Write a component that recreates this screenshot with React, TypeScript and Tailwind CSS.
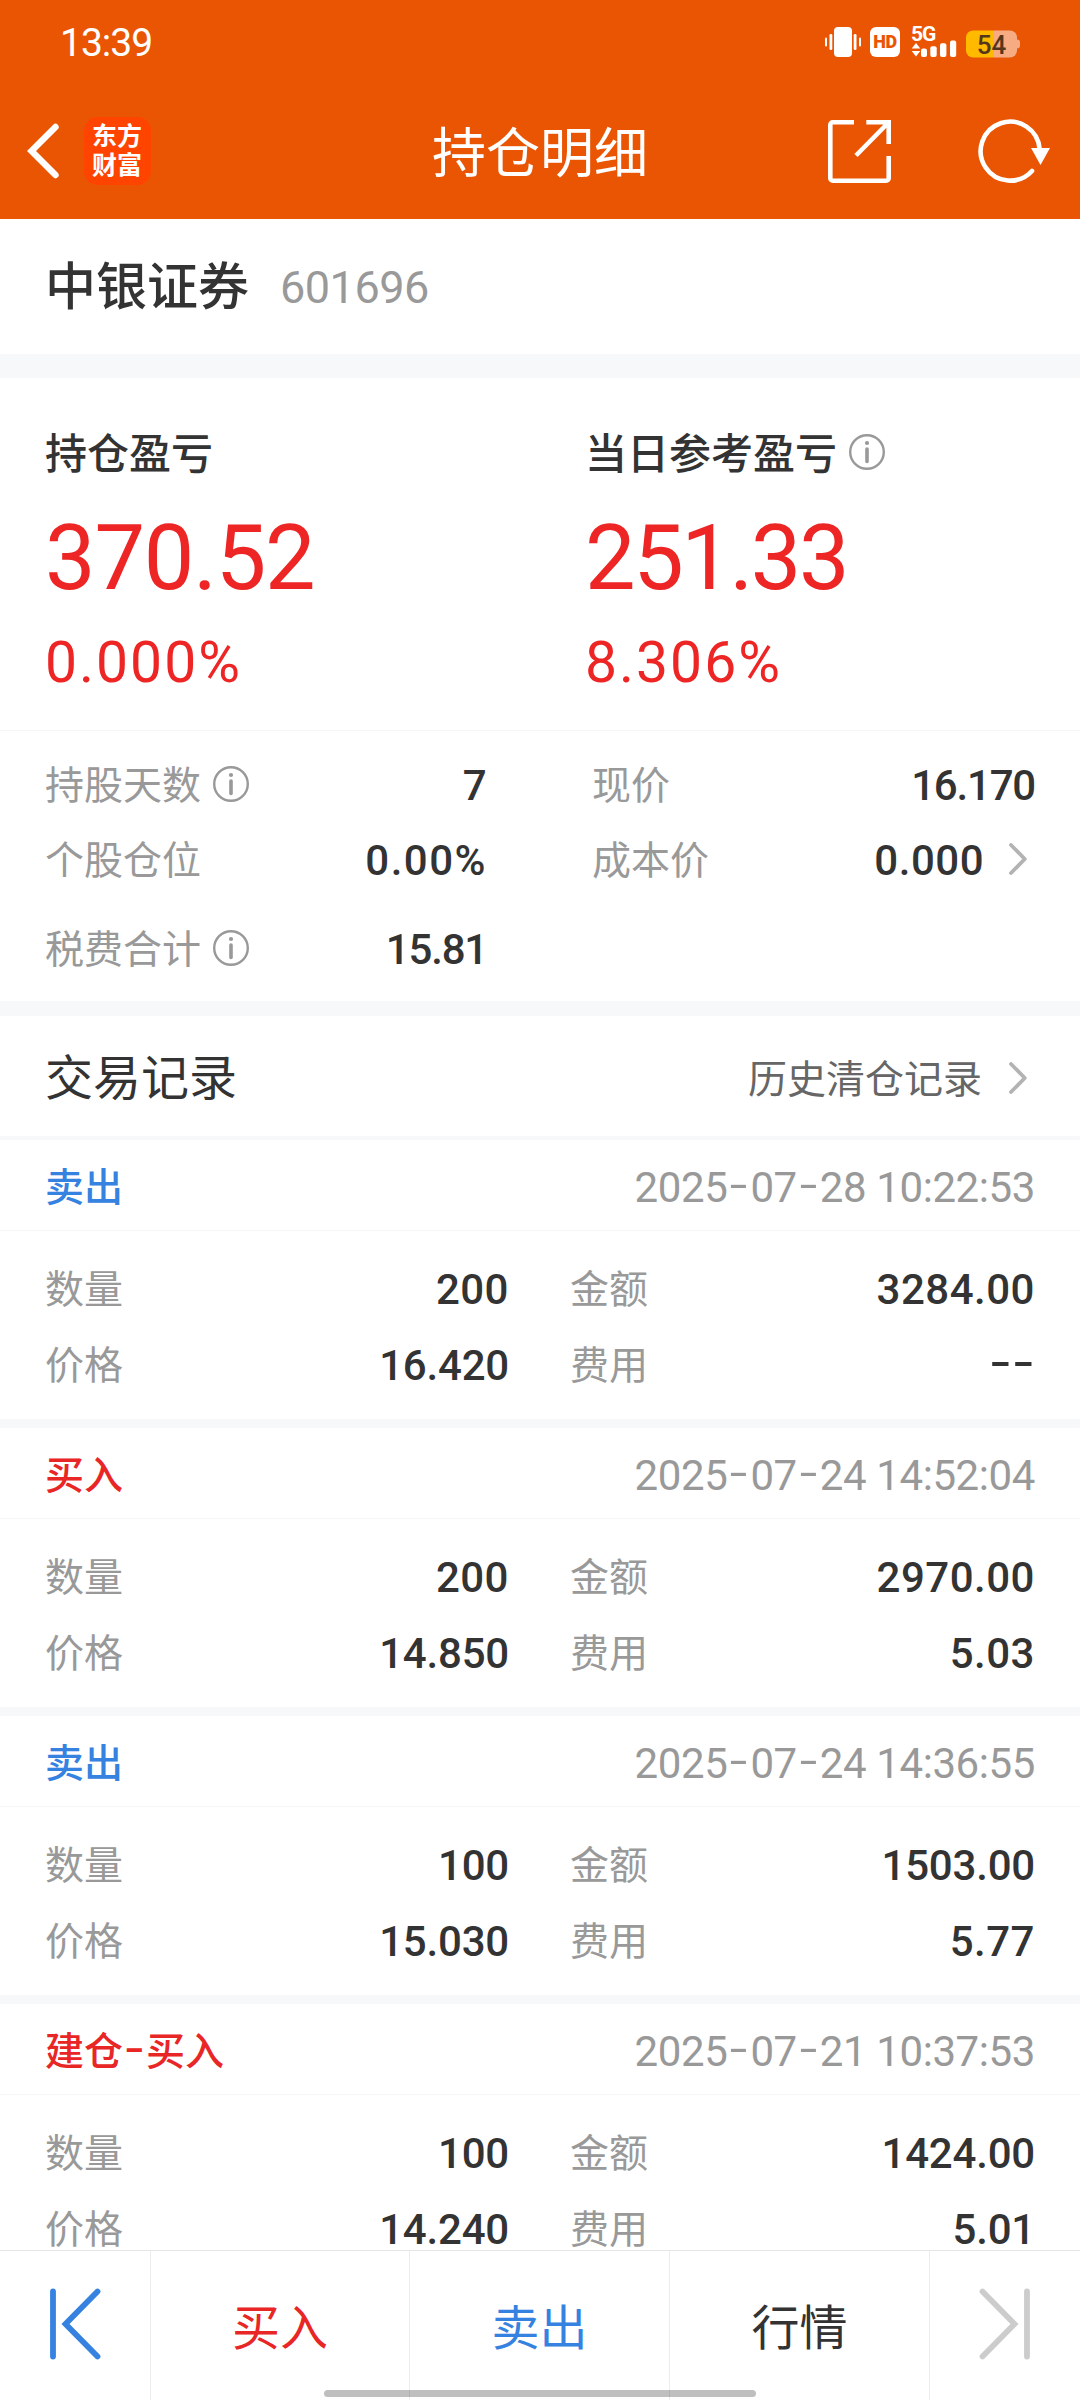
import clsx from "clsx";

type Trade = {
  side: string;
  sell?: boolean;
  time: string;
  count: string;
  amount: string;
  price: string;
  fee: string;
};

const trades: Trade[] = [
  { side: "卖出", sell: true, time: "2025-07-28 10:22:53", count: "200", amount: "3284.00", price: "16.420", fee: "--" },
  { side: "买入", time: "2025-07-24 14:52:04", count: "200", amount: "2970.00", price: "14.850", fee: "5.03" },
  { side: "卖出", sell: true, time: "2025-07-24 14:36:55", count: "100", amount: "1503.00", price: "15.030", fee: "5.77" },
  { side: "建仓-买入", time: "2025-07-21 10:37:53", count: "100", amount: "1424.00", price: "14.240", fee: "5.01" },
];

// Roboto's hyphen is short and sits low, so widen and lift it
const Dashed = ({ text }: { text: string }) => (
  <>
    {text.split(/(-)/).map((part, i) =>
      part === "-" ? (
        <span key={i} className="inline-block w-[23px] -translate-y-[3px] scale-x-150 text-center tracking-normal">
          -
        </span>
      ) : (
        part
      )
    )}
  </>
);

// tighten numbers with many ones, their advance is too wide otherwise
const numberTracking = (value: string) => {
  const ones = value.split("1").length - 1;
  if (ones > 1) return "tracking-[-1.2px]";
  if (value.includes("%")) return "tracking-[1.5px]";
  return ones === 1 ? "tracking-[-0.2px]" : "tracking-[0.5px]";
};

const InfoIcon = ({ className }: { className?: string }) => (
  <svg className={clsx("h-9 w-9 shrink-0", className)} viewBox="0 0 36 36" fill="none">
    <circle cx="18" cy="18" r="16.8" stroke="#999" strokeWidth="2.4" />
    <circle cx="18" cy="9" r="2.1" fill="#999" />
    <path d="M18 15v12.5" stroke="#999" strokeWidth="3.6" strokeLinecap="round" />
  </svg>
);

const ArrowRight = () => (
  <svg className="h-8 w-[18px] shrink-0" viewBox="0 0 18 32" fill="none">
    <path d="M2 2l13.8 14L2 30" stroke="#b3b3b3" strokeWidth="3.8" strokeLinecap="round" strokeLinejoin="round" />
  </svg>
);

const StatusBar = () => (
  <div className="flex h-[84px] items-center justify-between pl-[60px] pr-[60px] text-white">
    <span className="pt-[2px] text-[39px] leading-none tracking-[-1px]">13:39</span>
    <div className="flex items-center">
      <svg className="h-[30px] w-9" viewBox="0 0 36 30" fill="#fff">
        <rect x="9" y="0" width="18" height="30" rx="4" />
        <rect x="0" y="10.5" width="2" height="9" rx="1" />
        <rect x="4.5" y="7" width="2.8" height="16" rx="1.2" />
        <rect x="28.7" y="7" width="2.8" height="16" rx="1.2" />
        <rect x="34" y="10.5" width="2" height="9" rx="1" />
      </svg>
      <div className="ml-[9px] flex h-[30px] w-[30px] items-center justify-center rounded-md bg-white text-[18px] font-black leading-none tracking-[-0.5px] text-[#ea5504]">
        HD
      </div>
      <div className="relative ml-[11px] h-[30px] w-[46px]">
        <span className="absolute -top-[3px] left-0 text-[21px] font-bold leading-[20px] tracking-[-1px]">5G</span>
        <svg className="absolute inset-0 h-[30px] w-[46px]" viewBox="0 0 46 30" fill="#fff">
          <path d="M5 16l4.3 5.6H.7zM5 29.6l4.3-5.6H.7z" />
          <rect x="10" y="21.5" width="6" height="8.5" rx="2" />
          <rect x="19.3" y="19.3" width="6.4" height="10.7" rx="2" />
          <rect x="29" y="16.3" width="6.4" height="13.7" rx="2" />
          <rect x="39" y="13.5" width="6.2" height="16.5" rx="2" />
        </svg>
      </div>
      <div className="ml-[9px] flex h-[27px] translate-y-[1.5px] items-center">
        <div className="flex h-[27px] w-[51px] items-center justify-center rounded-[7px] bg-linear-to-r from-[#ffba00] from-54% to-[#f6ab83] to-54% pt-[2px] text-[26px] font-medium leading-none text-[#54371a]">
          54
        </div>
        <div className="h-[9px] w-[3px] rounded-r-sm bg-[#f6ab83]" />
      </div>
    </div>
  </div>
);

const Header = () => (
  <header className="h-[219px] shrink-0 bg-[#ea5504] text-white">
    <StatusBar />
    <div className="grid h-[135px] grid-cols-[1fr_auto_1fr] items-center pb-[1px]">
      <div className="flex items-center pl-[27px]">
        <svg className="h-[56px] w-8" viewBox="0 0 32 56" fill="none">
          <path d="M28.5 4L4.5 28l24 24" stroke="#fff" strokeWidth="6.4" strokeLinecap="round" strokeLinejoin="miter" />
        </svg>
        <div className="ml-[25px] flex h-[68px] w-[67px] flex-col items-center justify-center rounded-[14px] bg-[#ff4400] pr-[1px] text-[25px] font-bold leading-[29px]">
          <span>东方</span>
          <span>财富</span>
        </div>
      </div>
      <h1 className="pt-[7px] text-[54px] leading-none">持仓明细</h1>
      <div className="flex items-center justify-end pr-[29px]">
        <svg className="h-16 w-16" viewBox="0 0 64 64" fill="none" stroke="#fff" strokeWidth="4.6">
          <path d="M26 3.3H4.8a2.5 2.5 0 0 0-2.5 2.5v53.400a2.500 2.500 0 0 0 2.500 2.500h53.400a2.500 2.500 0 0 0 2.500-2.500V37" />
          <path d="M38.300 3.300h22.400V25M60 4L28 36.500" />
        </svg>
        <svg className="ml-[86px] h-16 w-[73px]" viewBox="0 0 73 64" fill="none">
          <path d="M61.600 30A29.500 29.500 0 1 0 54 52" stroke="#fff" strokeWidth="4.600" strokeLinecap="round" />
          <path d="M53 29h19L62.500 46z" fill="#fff" />
        </svg>
      </div>
    </div>
  </header>
);

const Summary = () => (
  <section className="grid h-[353px] shrink-0 grid-cols-[540px_1fr] border-b border-[#f5f6f8] pl-[45px] pt-[51px] text-[#ee2525]">
    <div>
      <div className="h-[52px] text-[42px] font-medium leading-[52px] text-[#333]">持仓盈亏</div>
      <div className="mt-[28px] h-[100px] text-[90px] leading-[100px] tracking-[-1.2px]">370.52</div>
      <div className="mt-[22px] text-[57px] leading-[64px] tracking-[2px]">0.000%</div>
    </div>
    <div>
      <div className="flex h-[52px] items-center text-[42px] font-medium leading-[52px] text-[#333]">
        当日参考盈亏
        <InfoIcon className="mb-[7px] ml-[12px]" />
      </div>
      <div className="mt-[28px] h-[100px] text-[90px] leading-[100px] tracking-[-2.4px]">251.33</div>
      <div className="mt-[22px] text-[57px] leading-[64px] tracking-[2px]">8.306%</div>
    </div>
  </section>
);

const Detail = ({ label, value, info, arrow }: { label: string; value: string; info?: boolean; arrow?: boolean }) => (
  <div className="flex items-center">
    <span className="text-[39px] leading-[60px] text-[#999]">{label}</span>
    {info && <InfoIcon className="mb-[3px] ml-[12px]" />}
    <span className={clsx("ml-auto text-[42px] font-medium leading-[60px] text-[#333]", numberTracking(value))}>
      {value}
    </span>
    {arrow && (
      <span className="ml-[25px] mr-[8px] flex pb-1">
        <ArrowRight />
      </span>
    )}
  </div>
);

const Details = () => (
  <section className="grid h-[270px] shrink-0 grid-cols-[442px_443px] grid-rows-[75px_75px_103px] justify-between pl-[45px] pr-[45px] pt-[17px]">
    <Detail label="持股天数" value="7" info />
    <Detail label="现价" value="16.170" />
    <Detail label="个股仓位" value="0.00%" />
    <Detail label="成本价" value="0.000" arrow />
    <Detail label="税费合计" value="15.81" info />
  </section>
);

const Field = ({ label, value }: { label: string; value: string }) => (
  <div className="flex items-center justify-between">
    <span className="text-[39px] leading-[42px] text-[#999]">{label}</span>
    <span className={clsx("text-[42px] font-medium leading-[42px] text-[#333]", numberTracking(value))}>
      <Dashed text={value} />
    </span>
  </div>
);

const TradeCard = ({ trade }: { trade: Trade }) => (
  <li className="mb-[9px] h-[279px] bg-white">
    <div className="flex h-[91px] items-center justify-between border-b border-[#f5f6f8] px-[45px] pt-[5px]">
      <span className={clsx("text-[39px] font-medium leading-[60px]", trade.sell ? "text-[#3582e0]" : "text-[#e92626]")}>
        <Dashed text={trade.side} />
      </span>
      <span className="text-[42px] leading-[60px] tracking-[-0.4px] text-[#999]">
        <Dashed text={trade.time} />
      </span>
    </div>
    <div className="grid grid-cols-[464px_465px] grid-rows-[76px_76px] justify-between px-[45px] pt-[21px]">
      <Field label="数量" value={trade.count} />
      <Field label="金额" value={trade.amount} />
      <Field label="价格" value={trade.price} />
      <Field label="费用" value={trade.fee} />
    </div>
  </li>
);

const BottomBar = () => (
  <nav className="relative grid h-[150px] shrink-0 grid-cols-[151px_259px_260px_260px_1fr] border-t border-[#e6e6e6] bg-white text-[48px]">
    <button className="flex items-center border-r border-[#ececec] pb-[3px] pl-[50px]">
      <svg className="h-[72px] w-[51px]" viewBox="0 0 51 72" fill="none" stroke="#3582e0" strokeWidth="5.800" strokeLinecap="round">
        <path d="M3 3.500v65M47.500 3.500L15.500 36l32 32.500" />
      </svg>
    </button>
    <button className="border-r border-[#ececec] pt-[7px] text-[#e92626]">买入</button>
    <button className="border-r border-[#ececec] pt-[7px] text-[#3582e0]">卖出</button>
    <button className="border-r border-[#ececec] pt-[7px] text-[#333]">行情</button>
    <button className="flex items-center justify-end pb-[3px] pr-[50px]">
      <svg className="h-[72px] w-[51px]" viewBox="0 0 51 72" fill="none" stroke="#ccc" strokeWidth="5.800" strokeLinecap="round">
        <path d="M48 3.500v65M3.500 3.500L35.500 36l-32 32.500" />
      </svg>
    </button>
    <div className="absolute bottom-[3px] left-[324px] h-[7px] w-[432px] rounded-full bg-black/25" />
  </nav>
);

export default function App() {
  return (
    <div className="flex h-[2400px] w-[1080px] flex-col overflow-hidden bg-white font-[Roboto,'Noto_Sans_CJK_SC',sans-serif]">
      <Header />
      <section className="flex h-[135px] shrink-0 items-center pl-[45px]">
        <h2 className="pt-[2px] text-[51px] font-medium leading-none text-[#333]">中银证券</h2>
        <span className="ml-[31px] pt-[2px] text-[45px] leading-none tracking-[-0.5px] text-[#999]">601696</span>
      </section>
      <div className="h-[24px] shrink-0 bg-[#f7f8fa]" />
      <Summary />
      <Details />
      <div className="h-[15px] shrink-0 bg-[#f7f8fa]" />
      <section className="flex h-[120px] shrink-0 items-center justify-between pl-[45px] pr-[53px]">
        <h3 className="pt-[5px] text-[48px] leading-[60px] text-[#333]">交易记录</h3>
        <div className="flex items-center pt-[8px] text-[39px] leading-[60px] text-[#666]">
          历史清仓记录
          <span className="ml-[27px] flex pb-1">
            <ArrowRight />
          </span>
        </div>
      </section>
      <ul className="min-h-0 flex-1 overflow-hidden bg-[#f7f8fa] pt-1">
        {trades.map((trade) => (
          <TradeCard key={trade.time} trade={trade} />
        ))}
      </ul>
      <BottomBar />
    </div>
  );
}
